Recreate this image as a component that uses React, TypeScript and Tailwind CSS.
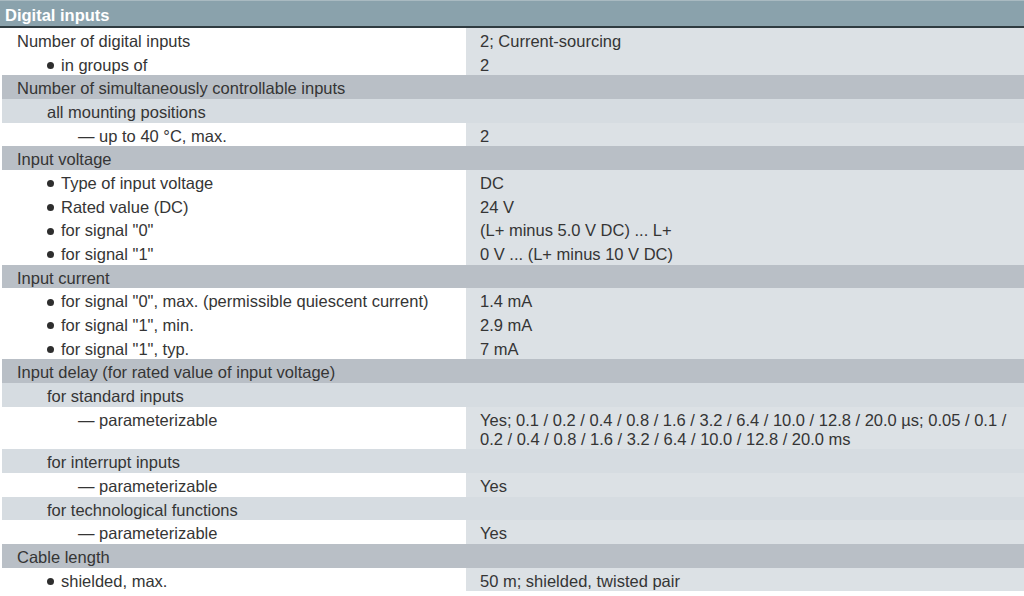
type Row = {
  label: string;
  value?: string;
  kind: 'group' | 'sub' | 'item';
  indent: 0 | 1 | 2;
  mark?: 'bullet' | 'dash';
};

const rows: Row[] = [
  { label: 'Number of digital inputs', value: '2; Current-sourcing', kind: 'item', indent: 0 },
  { label: 'in groups of', value: '2', kind: 'item', indent: 1, mark: 'bullet' },
  { label: 'Number of simultaneously controllable inputs', kind: 'group', indent: 0 },
  { label: 'all mounting positions', kind: 'sub', indent: 1 },
  { label: 'up to 40 °C, max.', value: '2', kind: 'item', indent: 2, mark: 'dash' },
  { label: 'Input voltage', kind: 'group', indent: 0 },
  { label: 'Type of input voltage', value: 'DC', kind: 'item', indent: 1, mark: 'bullet' },
  { label: 'Rated value (DC)', value: '24 V', kind: 'item', indent: 1, mark: 'bullet' },
  { label: 'for signal "0"', value: '(L+ minus 5.0 V DC) ... L+', kind: 'item', indent: 1, mark: 'bullet' },
  { label: 'for signal "1"', value: '0 V ... (L+ minus 10 V DC)', kind: 'item', indent: 1, mark: 'bullet' },
  { label: 'Input current', kind: 'group', indent: 0 },
  { label: 'for signal "0", max. (permissible quiescent current)', value: '1.4 mA', kind: 'item', indent: 1, mark: 'bullet' },
  { label: 'for signal "1", min.', value: '2.9 mA', kind: 'item', indent: 1, mark: 'bullet' },
  { label: 'for signal "1", typ.', value: '7 mA', kind: 'item', indent: 1, mark: 'bullet' },
  { label: 'Input delay (for rated value of input voltage)', kind: 'group', indent: 0 },
  { label: 'for standard inputs', kind: 'sub', indent: 1 },
  {
    label: 'parameterizable',
    value:
      'Yes; 0.1 / 0.2 / 0.4 / 0.8 / 1.6 / 3.2 / 6.4 / 10.0 / 12.8 / 20.0 µs; 0.05 / 0.1 / 0.2 / 0.4 / 0.8 / 1.6 / 3.2 / 6.4 / 10.0 / 12.8 / 20.0 ms',
    kind: 'item',
    indent: 2,
    mark: 'dash',
  },
  { label: 'for interrupt inputs', kind: 'sub', indent: 1 },
  { label: 'parameterizable', value: 'Yes', kind: 'item', indent: 2, mark: 'dash' },
  { label: 'for technological functions', kind: 'sub', indent: 1 },
  { label: 'parameterizable', value: 'Yes', kind: 'item', indent: 2, mark: 'dash' },
  { label: 'Cable length', kind: 'group', indent: 0 },
  { label: 'shielded, max.', value: '50 m; shielded, twisted pair', kind: 'item', indent: 1, mark: 'bullet' },
];

const indents = ['pl-[15px]', 'pl-[45px]', 'pl-[76px]'];

function Label({ row }: { row: Row }) {
  return (
    <span className={indents[row.indent]}>
      {row.mark === 'bullet' && (
        <span className="inline-block w-[7px] h-[7px] rounded-full bg-[#2e2e2e] mr-[7px] align-middle relative -top-[1px]" />
      )}
      {row.mark === 'dash' && <span>— </span>}
      {row.label}
    </span>
  );
}

export default function App() {
  return (
    <div
      className="w-[1024px] h-[596px] overflow-hidden bg-white text-[#353535] text-[16.5px] leading-[19px]"
      style={{ fontFamily: '"Liberation Sans", Arial, sans-serif' }}
    >
      <div className="h-[28px] bg-[#8aa2ac] border-t border-[#a9bac1] border-b-2 border-b-[#2f3b40] flex items-center pl-[5px] pt-[3px]">
        <span className="text-white font-bold text-[16.5px]">Digital inputs</span>
      </div>
      <div className="flex flex-col pl-[2px]">
        {rows.map((row, i) => {
          if (row.kind !== 'item') {
            return (
              <div
                key={i}
                className={`pt-[4px] pb-[0.68px] ${row.kind === 'group' ? 'bg-[#b9bfc6]' : 'bg-[#d6dce1]'}`}
              >
                <Label row={row} />
              </div>
            );
          }
          return (
            <div key={i} className="flex">
              <div className="w-[464px] shrink-0 pt-[4px] pb-[0.68px]">
                <Label row={row} />
              </div>
              <div className="flex-1 bg-[#dce1e5] pt-[4px] pb-[0.68px] pl-[14px] pr-[6px]">{row.value}</div>
            </div>
          );
        })}
      </div>
    </div>
  );
}
